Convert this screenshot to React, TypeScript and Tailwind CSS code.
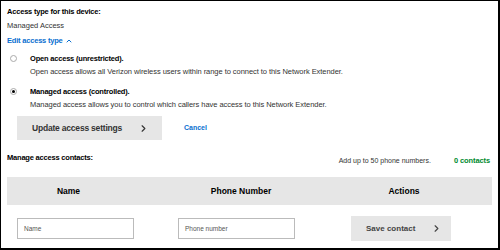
import { ChevronUp, ChevronRight } from "lucide-react";

export default function App() {
  return (
    <div className="w-[500px] h-[250px] overflow-hidden bg-white border-t border-l border-r-2 border-b-2 border-black font-['Liberation_Sans',Arial,sans-serif] text-black">
      <div className="pl-[6px] pr-[6px] pt-[6px]">
        <div className="text-[7.5px] font-bold leading-[10px] tracking-[-0.2px]">Access type for this device:</div>
        <div className="text-[7.5px] text-[#333] leading-[10px] mt-[4px]">Managed Access</div>
        <div className="mt-[5px] flex items-center gap-[2px] text-[7.5px] font-bold text-[#0a6fd0] leading-[10px] tracking-[-0.2px]">
          Edit access type
          <ChevronUp className="w-[8px] h-[8px]" strokeWidth={3} />
        </div>

        <div className="mt-[8px] flex">
          <div className="w-[23px] pl-[3px] pt-[1px]">
            <div className="w-[7px] h-[7px] rounded-full border border-[#aaa] bg-white" />
          </div>
          <div>
            <div className="text-[7.5px] font-bold leading-[10px] tracking-[-0.2px]">Open access (unrestricted).</div>
            <div className="text-[7.5px] text-[#333] leading-[10px] mt-[3px] tracking-[-0.05px]">Open access allows all Verizon wireless users within range to connect to this Network Extender.</div>
          </div>
        </div>

        <div className="mt-[10px] flex">
          <div className="w-[23px] pl-[3px] pt-[1px]">
            <div className="w-[7px] h-[7px] rounded-full border border-[#aaa] bg-white flex items-center justify-center">
              <div className="w-[3px] h-[3px] rounded-full bg-black" />
            </div>
          </div>
          <div>
            <div className="text-[7.5px] font-bold leading-[10px] tracking-[-0.2px]">Managed access (controlled).</div>
            <div className="text-[7.5px] text-[#333] leading-[10px] mt-[3px] tracking-[-0.05px]">Managed access allows you to control which callers have access to this Network Extender.</div>
          </div>
        </div>

        <div className="mt-[6px] ml-[10px] flex items-center">
          <div className="w-[145px] h-[24px] bg-[#e6e6e6] flex items-center pl-[15px] text-[8.5px] font-bold text-[#333] tracking-[-0.2px]">
            Update access settings
            <ChevronRight className="w-[11px] h-[11px] ml-[16px]" strokeWidth={2.5} />
          </div>
          <div className="ml-[22px] text-[7px] font-bold text-[#0a6fd0]">Cancel</div>
        </div>

        <div className="mt-[13px] flex items-end justify-between">
          <div className="text-[7.5px] font-bold leading-[10px] tracking-[-0.2px]">Manage access contacts:</div>
          <div className="flex items-center text-[7px] leading-[10px] mb-[-3px]">
            <span className="text-[#333]">Add up to 50 phone numbers.</span>
            <span className="ml-[23px] mr-[2px] text-[7.5px] font-bold text-[#008a2e] tracking-[-0.1px]">0 contacts</span>
          </div>
        </div>

        <div className="mt-[14px] flex h-[28px] bg-[#e6e6e6] items-center text-[8.5px] font-bold text-center">
          <div className="w-[123px]">Name</div>
          <div className="w-[222px]">Phone Number</div>
          <div className="w-[104px]">Actions</div>
        </div>

        <div className="mt-[11px] flex items-center">
          <div className="ml-[10px] w-[117px] h-[21px] border border-[#bbb] flex items-center pl-[6px] text-[6.5px] text-[#555]">Name</div>
          <div className="ml-[44px] w-[117px] h-[21px] border border-[#bbb] flex items-center pl-[6px] text-[6.5px] text-[#555]">Phone number</div>
          <div className="ml-[56px] w-[100px] h-[25px] bg-[#e6e6e6] flex items-center pl-[15px] text-[8px] font-bold text-[#444]">
            Save contact
            <ChevronRight className="w-[11px] h-[11px] ml-[16px]" strokeWidth={2.5} />
          </div>
        </div>
      </div>
    </div>
  );
}
